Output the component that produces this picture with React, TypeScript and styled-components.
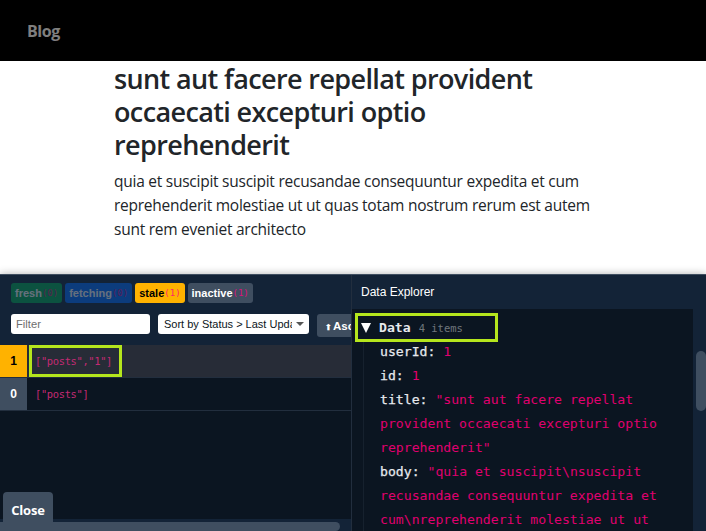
import React from 'react';
import styled, { createGlobalStyle } from 'styled-components';

const GlobalStyle = createGlobalStyle`
  html, body {
    margin: 0;
    padding: 0;
    height: 100%;
    overflow: hidden;
    background: #fff;
  }
`;

const Page = styled.div`
  display: flex;
  flex-direction: column;
  width: 706px;
  height: 531px;
  overflow: hidden;
  font-family: 'Open Sans', 'Noto Sans', sans-serif;
`;

const Nav = styled.nav`
  display: flex;
  align-items: center;
  flex: none;
  height: 61px;
  padding-left: 27px;
  background: #000;
`;

const NavLink = styled.a`
  color: rgba(255, 255, 255, 0.5);
  font-size: 16px;
  font-weight: 700;
  letter-spacing: -0.4px;
`;

const Article = styled.main`
  flex: 1;
  width: 490px;
  padding-left: 114px;
`;

const Title = styled.h1`
  max-width: 440px;
  margin: 1px 0 8px;
  color: #212529;
  font-size: 27px;
  font-weight: 600;
  line-height: 33px;
  letter-spacing: -0.62px;
`;

const Body = styled.p`
  margin: 0;
  color: #212529;
  font-size: 15.5px;
  line-height: 24px;
  letter-spacing: -0.25px;
`;

const Devtools = styled.section`
  display: flex;
  flex: none;
  position: relative;
  height: 257px;
  border-top: 1px solid #3f4e60;
  box-sizing: border-box;
  background: #0b1521;
  box-shadow: 0 0 8px rgba(0, 0, 0, 0.3);
  font-family: 'Liberation Sans', Arial, sans-serif;
  color: #fff;
`;

const QueriesPane = styled.div`
  display: flex;
  flex-direction: column;
  flex: none;
  width: 352px;
  overflow: hidden;
  border-right: 1px solid #222e3e;
  box-sizing: border-box;
`;

const QueriesHeader = styled.header`
  flex: none;
  height: 70px;
  padding: 8px 0 0 11px;
  box-sizing: border-box;
  background: #132337;
`;

const Badges = styled.div`
  display: flex;
  gap: 3px;
  height: 20px;
`;

const Badge = styled.span<{ $bg: string; $fg: string; $dim?: boolean }>`
  display: flex;
  align-items: center;
  padding: 0 4px;
  border-radius: 3px;
  background: ${(p) => p.$bg};
  color: ${(p) => p.$fg};
  font-size: 11px;
  font-weight: 700;
  opacity: ${(p) => (p.$dim ? 0.35 : 1)};
`;

const BadgeCount = styled.code`
  font-family: 'DejaVu Sans Mono', monospace;
  font-size: 9px;
  font-weight: 400;
  color: #ff0085;
  opacity: 0.8;
`;

const Controls = styled.div`
  display: flex;
  align-items: flex-start;
  gap: 8px;
  margin-top: 11px;
  white-space: nowrap;
`;

const FilterInput = styled.input`
  flex: none;
  width: 139px;
  height: 20px;
  padding: 0 5px;
  border: 0;
  border-radius: 3px;
  box-sizing: border-box;
  background: #fff;
  color: #0b1521;
  font-family: inherit;
  font-size: 11.2px;

  &::placeholder {
    color: #6e6e6e;
  }
`;

const SelectWrap = styled.div`
  position: relative;
  flex: none;
  width: 151px;
  height: 20px;

  &::after {
    content: '';
    position: absolute;
    right: 5px;
    top: 8px;
    border-top: 4px solid #555;
    border-left: 4px solid transparent;
    border-right: 4px solid transparent;
    pointer-events: none;
  }
`;

const SortSelect = styled.select`
  appearance: none;
  display: block;
  width: 100%;
  height: 20px;
  padding: 0 17px 0 6px;
  border: 0;
  border-radius: 3px;
  box-sizing: border-box;
  background: #fff;
  color: #0b1521;
  font-family: inherit;
  font-size: 11px;
`;

const SortButton = styled.button`
  flex: none;
  height: 23px;
  padding: 0 8px;
  border: 0;
  border-radius: 3px;
  background: #3f4e60;
  color: #fff;
  font-family: inherit;
  font-size: 11.5px;
  font-weight: 700;
`;

const SortArrow = styled.span`
  margin-right: 1px;
  font-size: 8px;
`;

const QueryList = styled.div`
  flex: 1;
`;

const QueryRow = styled.div<{ $active?: boolean }>`
  display: flex;
  height: 33px;
  border-bottom: 1px solid #222e3e;
  box-sizing: border-box;
  background: ${(p) => (p.$active ? '#272c37' : 'transparent')};
`;

const Observers = styled.div<{ $bg: string; $fg: string }>`
  display: flex;
  align-items: center;
  justify-content: center;
  flex: none;
  width: 27px;
  background: ${(p) => p.$bg};
  color: ${(p) => p.$fg};
  font-size: 12px;
  font-weight: 700;
`;

const QueryKey = styled.code`
  align-self: center;
  padding-left: 8px;
  color: #c42a74;
  font-family: 'DejaVu Sans Mono', monospace;
  font-size: 10.4px;
  letter-spacing: -0.33px;
`;

const ExplorerPane = styled.div`
  display: flex;
  flex-direction: column;
  flex: 1;
  position: relative;
  min-width: 0;
  background: #132337;
`;

const ExplorerTitle = styled.div`
  flex: none;
  height: 34px;
  padding: 10px 0 0 9px;
  box-sizing: border-box;
  font-size: 12px;
`;

const ExplorerBody = styled.div`
  flex: 1;
  overflow: hidden;
  margin-right: 13px;
  padding: 7px 0 0 9px;
  background: #0b1521;
  font-family: 'DejaVu Sans Mono', monospace;
  font-size: 13.15px;
  line-height: 24px;
`;

const DataRow = styled.div`
  display: flex;
  align-items: center;
  height: 24px;
`;

const Caret = styled.span`
  flex: none;
  width: 0;
  height: 0;
  margin-right: 8px;
  border-top: 10px solid #fff;
  border-left: 5.5px solid transparent;
  border-right: 5.5px solid transparent;
`;

const DataLabel = styled.span`
  color: #e6e9ee;
  font-weight: 700;
`;

const ItemCount = styled.span`
  margin-left: 8px;
  color: rgba(255, 255, 255, 0.42);
  font-size: 10.5px;
`;

const Entries = styled.div`
  margin-left: 2px;
  padding-left: 16px;
  border-left: 1px solid #16212e;
`;

const Entry = styled.div`
  width: 290px;
`;

const Key = styled.span`
  color: #e6e9ee;
  -webkit-text-stroke: 0.25px #e6e9ee;
`;

const Value = styled.span`
  color: #e0006f;
`;

const Highlight = styled.div<{ $left: number; $top: number; $w: number; $h: number }>`
  position: absolute;
  left: ${(p) => p.$left}px;
  top: ${(p) => p.$top}px;
  width: ${(p) => p.$w}px;
  height: ${(p) => p.$h}px;
  border: 3px solid #b5e61d;
  box-sizing: border-box;
  pointer-events: none;
`;

const VerticalThumb = styled.div`
  position: absolute;
  right: 0;
  top: 76px;
  width: 10px;
  height: 60px;
  border-radius: 5px;
  background: #3f4e60;
`;

const HorizontalTrack = styled.div`
  position: absolute;
  left: 0;
  bottom: 0;
  width: 351px;
  height: 12px;
  background: #132337;
`;

const HorizontalThumb = styled.div`
  position: absolute;
  left: 0;
  bottom: 0;
  width: 340px;
  height: 9px;
  border-radius: 0 5px 5px 0;
  background: #3f4e60;
`;

const CloseButton = styled.button`
  position: absolute;
  left: 3px;
  bottom: 9px;
  width: 50px;
  height: 30px;
  padding: 5px 0 0;
  border: 0;
  border-radius: 4px 4px 0 0;
  background: #3f4e60;
  color: #fff;
  font-family: 'Open Sans', 'Noto Sans', sans-serif;
  font-size: 13px;
  font-weight: 700;
  letter-spacing: -0.2px;
`;

export default function App() {
  return (
    <Page>
      <GlobalStyle />
      <Nav>
        <NavLink>Blog</NavLink>
      </Nav>
      <Article>
        <Title>sunt aut facere repellat provident occaecati excepturi optio reprehenderit</Title>
        <Body>
          quia et suscipit suscipit recusandae consequuntur expedita et cum reprehenderit molestiae ut ut
          quas totam nostrum rerum est autem sunt rem eveniet architecto
        </Body>
      </Article>
      <Devtools>
        <QueriesPane>
          <QueriesHeader>
            <Badges>
              <Badge $bg="#00ab52" $fg="#fff" $dim>
                fresh<BadgeCount>(0)</BadgeCount>
              </Badge>
              <Badge $bg="#006bff" $fg="#fff" $dim>
                fetching<BadgeCount>(0)</BadgeCount>
              </Badge>
              <Badge $bg="#ffb200" $fg="#000">
                stale<BadgeCount>(1)</BadgeCount>
              </Badge>
              <Badge $bg="#3f4e60" $fg="#fff">
                inactive<BadgeCount>(1)</BadgeCount>
              </Badge>
            </Badges>
            <Controls>
              <FilterInput placeholder="Filter" readOnly />
              <SelectWrap>
                <SortSelect defaultValue="status">
                  <option value="status">Sort by Status &gt; Last Updated</option>
                </SortSelect>
              </SelectWrap>
              <SortButton>
                <SortArrow>⬆</SortArrow>Asc
              </SortButton>
            </Controls>
          </QueriesHeader>
          <QueryList>
            <QueryRow $active>
              <Observers $bg="#ffb200" $fg="#000">1</Observers>
              <QueryKey>["posts","1"]</QueryKey>
            </QueryRow>
            <QueryRow>
              <Observers $bg="#3f4e60" $fg="#fff">0</Observers>
              <QueryKey>["posts"]</QueryKey>
            </QueryRow>
          </QueryList>
        </QueriesPane>
        <ExplorerPane>
          <ExplorerTitle>Data Explorer</ExplorerTitle>
          <ExplorerBody>
            <DataRow>
              <Caret />
              <DataLabel>Data</DataLabel>
              <ItemCount>4 items</ItemCount>
            </DataRow>
            <Entries>
              <Entry>
                <Key>userId:</Key> <Value>1</Value>
              </Entry>
              <Entry>
                <Key>id:</Key> <Value>1</Value>
              </Entry>
              <Entry>
                <Key>title:</Key>{' '}
                <Value>"sunt aut facere repellat provident occaecati excepturi optio reprehenderit"</Value>
              </Entry>
              <Entry>
                <Key>body:</Key>{' '}
                <Value>"quia et suscipit\nsuscipit recusandae consequuntur expedita et cum\nreprehenderit molestiae ut ut</Value>
              </Entry>
            </Entries>
          </ExplorerBody>
          <VerticalThumb />
          <Highlight $left={3} $top={38} $w={143} $h={29} />
        </ExplorerPane>
        <HorizontalTrack />
        <HorizontalThumb />
        <CloseButton>Close</CloseButton>
        <Highlight $left={29} $top={70} $w={93} $h={32} />
      </Devtools>
    </Page>
  );
}
